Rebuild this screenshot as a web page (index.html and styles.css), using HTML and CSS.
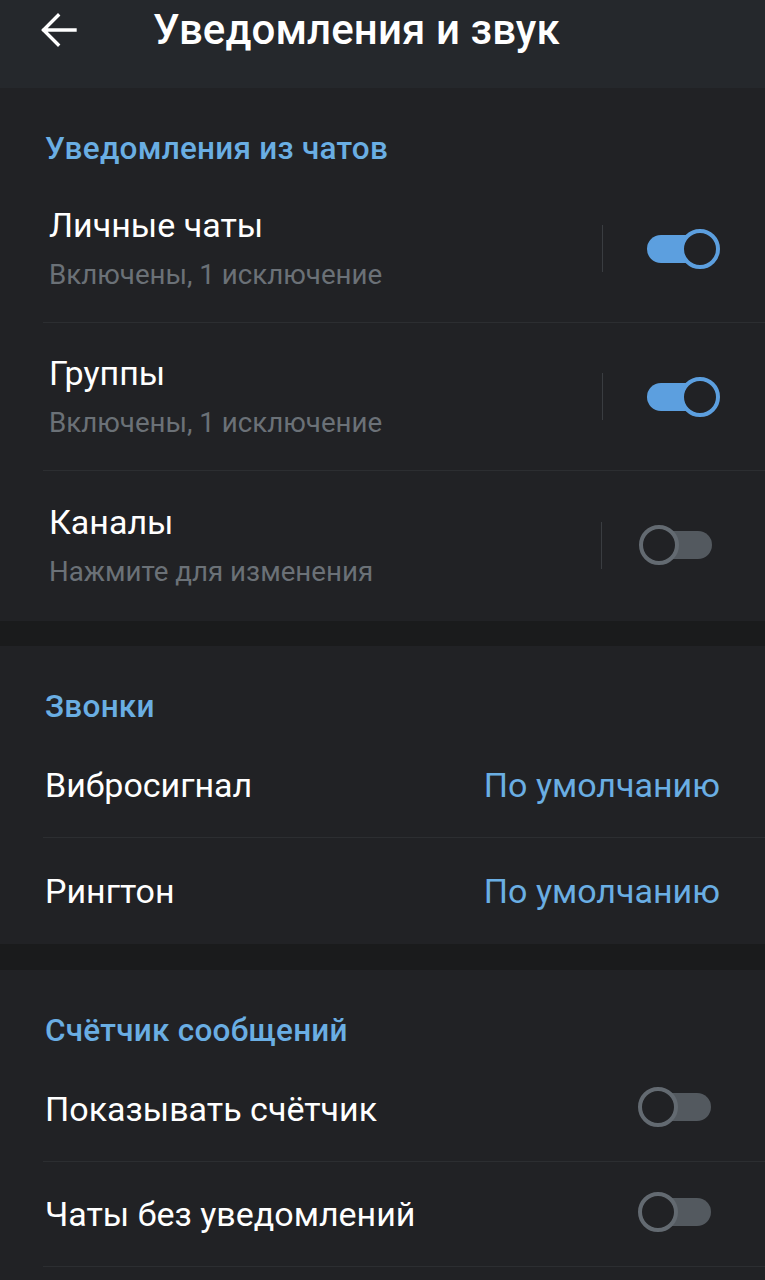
FILE: index.html
```html
<!DOCTYPE html>
<html lang="ru">
<head>
<meta charset="utf-8">
<title>Уведомления и звук</title>
<link rel="stylesheet" href="styles.css">
</head>
<body>
<header class="topbar">
  <svg class="back" width="40" height="40" viewBox="0 0 40 40" aria-hidden="true">
    <path d="M36 20 H5 M19 5.5 L4.5 20 L19 34.5" fill="none" stroke="#ffffff" stroke-width="3.4" stroke-linecap="square" stroke-linejoin="miter"/>
  </svg>
  <h1 class="title">Уведомления и звук</h1>
</header>

<section class="section s1">
  <h2 class="sec-head">Уведомления из чатов</h2>
  <div class="row row-check divided">
    <div class="texts">
      <div class="row-title">Личные чаты</div>
      <div class="row-sub">Включены, 1 исключение</div>
    </div>
    <span class="vline"></span>
    <span class="toggle on"><span class="track"></span><span class="knob"></span></span>
  </div>
  <div class="row row-check divided">
    <div class="texts">
      <div class="row-title">Группы</div>
      <div class="row-sub">Включены, 1 исключение</div>
    </div>
    <span class="vline"></span>
    <span class="toggle on"><span class="track"></span><span class="knob"></span></span>
  </div>
  <div class="row row-check">
    <div class="texts">
      <div class="row-title">Каналы</div>
      <div class="row-sub">Нажмите для изменения</div>
    </div>
    <span class="vline"></span>
    <span class="toggle off"><span class="track"></span><span class="knob"></span></span>
  </div>
</section>

<div class="band"></div>

<section class="section s2">
  <h2 class="sec-head">Звонки</h2>
  <div class="row row-simple divided">
    <span class="label">Вибросигнал</span>
    <span class="value">По умолчанию</span>
  </div>
  <div class="row row-simple">
    <span class="label">Рингтон</span>
    <span class="value">По умолчанию</span>
  </div>
</section>

<div class="band wide"></div>

<section class="section s3">
  <h2 class="sec-head">Счётчик сообщений</h2>
  <div class="row row-simple divided">
    <span class="label">Показывать счётчик</span>
    <span class="toggle off small"><span class="track"></span><span class="knob"></span></span>
  </div>
  <div class="row row-simple divided">
    <span class="label">Чаты без уведомлений</span>
    <span class="toggle off small"><span class="track"></span><span class="knob"></span></span>
  </div>
</section>
</body>
</html>
```

FILE: styles.css
```css
html, body {
  margin: 0;
  padding: 0;
}
body {
  background: #212225;
  font-family: Roboto, "Noto Sans", "DejaVu Sans", sans-serif;
  color: #ffffff;
  width: 765px;
  height: 1280px;
  overflow: hidden;
}
.topbar {
  height: 88px;
  background: #25282c;
  display: flex;
  align-items: flex-start;
  box-sizing: border-box;
  padding-top: 10px;
}
.back {
  margin-left: 39px;
  flex: none;
}
.title {
  margin: -2px 0 0 74px;
  font-size: 42px;
  font-weight: 500;
  line-height: 44px;
  letter-spacing: 0.1px;
  color: #ffffff;
}
.section {
  background: #212225;
}
.s1 {
  padding-bottom: 2px;
}
.s2 {
  padding-bottom: 1px;
}
.s3 {
  padding-bottom: 20px;
}
.sec-head {
  margin: 0;
  height: 87px;
  box-sizing: border-box;
  padding: 42px 0 0 45px;
  font-size: 31.5px;
  line-height: 38px;
  font-weight: 500;
  letter-spacing: 0.25px;
  color: #6aaee3;
}
.row {
  display: flex;
  align-items: center;
  margin-left: 43px;
  box-sizing: border-box;
}
.row.divided {
  border-bottom: 1px solid #2c2e31;
}
.row-check {
  height: 148px;
  padding-left: 6px;
  padding-right: 45px;
}
.texts {
  flex: 1;
  display: flex;
  flex-direction: column;
  padding-bottom: 1px;
}
.row-title {
  font-size: 34px;
  line-height: 40px;
  color: #ffffff;
}
.row-sub {
  margin-top: 14px;
  font-size: 27.7px;
  line-height: 32px;
  color: #6b7177;
}
.vline {
  width: 1px;
  height: 47px;
  background: #3a3d41;
  margin-right: 37px;
  flex: none;
}
.row-simple {
  height: 105px;
  padding-left: 2px;
  padding-right: 45px;
  justify-content: space-between;
}
.label {
  font-size: 34px;
  line-height: 40px;
  color: #ffffff;
}
.value {
  font-size: 34px;
  line-height: 40px;
  color: #6aaee3;
}
.toggle {
  position: relative;
  width: 80px;
  height: 42px;
  flex: none;
}
.toggle .track {
  position: absolute;
  top: 7px;
  height: 28px;
  width: 56px;
  border-radius: 14px;
}
.toggle .knob {
  position: absolute;
  top: 1px;
  width: 40px;
  height: 40px;
  box-sizing: border-box;
  border-radius: 50%;
  background: #212225;
}
.toggle.on .track {
  left: 7px;
  background: #5c9fdf;
}
.toggle.on .knob {
  right: 0;
  border: 4.5px solid #5c9fdf;
}
.toggle.off {
  width: 74px;
  margin-right: 7px;
}
.toggle.off .track {
  left: 18px;
  width: 55px;
  background: #53595f;
}
.toggle.off .knob {
  left: 0;
  border: 4.5px solid #636a71;
}
.toggle.small {
  margin-right: 8px;
  margin-top: -4px;
}
.band {
  height: 25px;
  background: #1a1b1c;
}
.band.wide {
  height: 26px;
}
```
